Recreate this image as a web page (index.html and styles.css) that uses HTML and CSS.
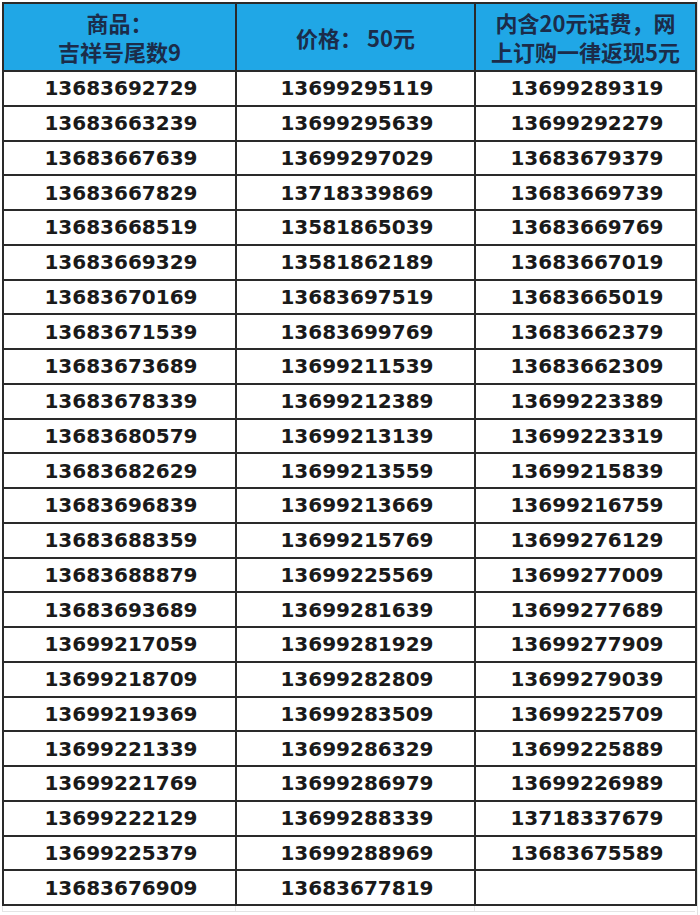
FILE: index.html
```html
<!DOCTYPE html>
<html lang="zh">
<head>
<meta charset="utf-8">
<title>吉祥号</title>
<link rel="stylesheet" href="styles.css">
</head>
<body>
<div class="sheet">
<table class="numbers">
  <colgroup>
    <col class="c1"><col class="c2"><col class="c3">
  </colgroup>
  <thead>
    <tr>
      <th>商品：<br>吉祥号尾数9</th>
      <th>价格： 50元</th>
      <th>内含20元话费，网<br>上订购一律返现5元</th>
    </tr>
  </thead>
  <tbody>
    <tr><td>13683692729</td><td>13699295119</td><td>13699289319</td></tr>
    <tr><td>13683663239</td><td>13699295639</td><td>13699292279</td></tr>
    <tr><td>13683667639</td><td>13699297029</td><td>13683679379</td></tr>
    <tr><td>13683667829</td><td>13718339869</td><td>13683669739</td></tr>
    <tr><td>13683668519</td><td>13581865039</td><td>13683669769</td></tr>
    <tr><td>13683669329</td><td>13581862189</td><td>13683667019</td></tr>
    <tr><td>13683670169</td><td>13683697519</td><td>13683665019</td></tr>
    <tr><td>13683671539</td><td>13683699769</td><td>13683662379</td></tr>
    <tr><td>13683673689</td><td>13699211539</td><td>13683662309</td></tr>
    <tr><td>13683678339</td><td>13699212389</td><td>13699223389</td></tr>
    <tr><td>13683680579</td><td>13699213139</td><td>13699223319</td></tr>
    <tr><td>13683682629</td><td>13699213559</td><td>13699215839</td></tr>
    <tr><td>13683696839</td><td>13699213669</td><td>13699216759</td></tr>
    <tr><td>13683688359</td><td>13699215769</td><td>13699276129</td></tr>
    <tr><td>13683688879</td><td>13699225569</td><td>13699277009</td></tr>
    <tr><td>13683693689</td><td>13699281639</td><td>13699277689</td></tr>
    <tr><td>13699217059</td><td>13699281929</td><td>13699277909</td></tr>
    <tr><td>13699218709</td><td>13699282809</td><td>13699279039</td></tr>
    <tr><td>13699219369</td><td>13699283509</td><td>13699225709</td></tr>
    <tr><td>13699221339</td><td>13699286329</td><td>13699225889</td></tr>
    <tr><td>13699221769</td><td>13699286979</td><td>13699226989</td></tr>
    <tr><td>13699222129</td><td>13699288339</td><td>13718337679</td></tr>
    <tr><td>13699225379</td><td>13699288969</td><td>13683675589</td></tr>
    <tr><td>13683676909</td><td>13683677819</td><td></td></tr>
  </tbody>
</table>
<div class="ghost">
  <div class="g1"></div><div class="g2"></div><div class="g3"></div>
</div>
</div>
</body>
</html>
```
FILE: styles.css
```css
html, body {
  margin: 0;
  padding: 0;
  background: #ffffff;
}
.sheet {
  padding: 2px 0 0 2px;
  width: 698px;
  border-right: 1px solid #e2e2e2;
  box-sizing: border-box;
  height: 915px;
}
.numbers {
  border-collapse: collapse;
  width: 693px;
  table-layout: fixed;
}
.c1 { width: 233px; }
.c2 { width: 239px; }
.c3 { width: 221px; }
.numbers th,
.numbers td {
  border: 2px solid #2a2a2a;
  text-align: center;
  padding: 0;
}
.numbers th {
  background: #20a7e6;
  color: #1b2c4a;
  font-family: "Noto Sans CJK SC", "DejaVu Sans", sans-serif;
  font-weight: 700;
  font-size: 22px;
  line-height: 29px;
  height: 66px;
}
.numbers td {
  height: 32.75px;
  color: #1a1a1a;
  font-family: "DejaVu Sans", sans-serif;
  font-weight: 700;
  font-size: 20px;
  line-height: 24px;
  padding-left: 3px;
}
.ghost {
  display: flex;
  height: 6px;
  width: 693px;
}
.ghost div {
  border-left: 1px solid #e4e4e4;
  border-bottom: 1px solid #e4e4e4;
}
.g1 { width: 233px; }
.g2 { width: 239px; }
.g3 { width: 221px; }
```
